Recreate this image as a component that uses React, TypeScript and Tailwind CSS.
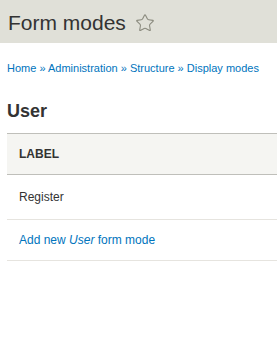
import { Star } from 'lucide-react';

export default function App() {
  return (
    <div className="min-h-[355px] bg-white text-[#333] overflow-hidden" style={{ fontFamily: '"Liberation Sans", Arial, sans-serif' }}>
      <div className="h-[43px] bg-[#e0e0d8] flex items-center pl-[8px] pt-[2px]">
        <h1 className="text-[21px] leading-none text-[#333] font-normal">Form modes</h1>
        <Star className="ml-[9px] w-[20px] h-[20px] text-[#8a8a7e]" strokeWidth={1.3} />
      </div>

      <div className="pl-[7px]">
        <nav className="mt-[18px] text-[11px] leading-[14px] text-[#0074bd]">
          <a href="#">Home</a>
          <span> » </span>
          <a href="#">Administration</a>
          <span> » </span>
          <a href="#">Structure</a>
          <span> » </span>
          <a href="#">Display modes</a>
        </nav>

        <h2 className="mt-[25px] text-[18px] leading-[22px] font-bold text-[#333]">User</h2>

        <table className="mt-[11px] w-[290px] border-collapse text-[12px]">
          <thead>
            <tr className="bg-[#f5f5f2] border-t border-b border-[#bfbfba]">
              <th className="h-[41px] text-left pl-[12px] text-[12px] font-bold uppercase text-[#333]">Label</th>
            </tr>
          </thead>
          <tbody>
            <tr className="border-b border-[#e6e4df]">
              <td className="h-[45px] pl-[12px] text-[#333]">Register</td>
            </tr>
            <tr className="border-b border-[#e6e4df]">
              <td className="h-[41px] pl-[12px]">
                <a href="#" className="text-[#0074bd]">
                  Add new <em>User</em> form mode
                </a>
              </td>
            </tr>
          </tbody>
        </table>
      </div>
    </div>
  );
}
